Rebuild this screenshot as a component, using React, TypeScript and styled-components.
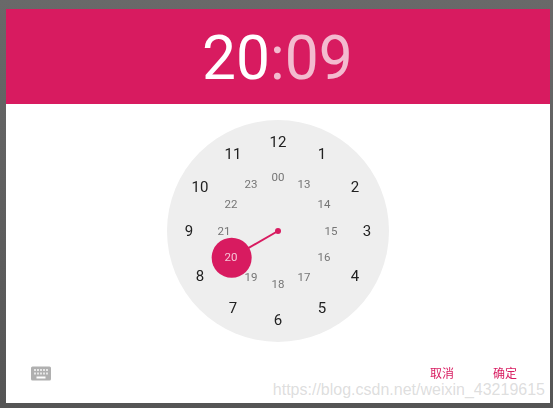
import React from "react";
import styled, { createGlobalStyle } from "styled-components";

const GlobalStyle = createGlobalStyle`
  html, body {
    margin: 0;
    padding: 0;
    height: 100%;
    overflow: hidden;
    background: #5f5f5f;
  }
  #root {
    height: 100%;
  }
`;

const PINK = "#d81b60";

const Backdrop = styled.div`
  width: 553px;
  height: 408px;
  padding: 9px 3px 5px 6px;
  box-sizing: border-box;
  background: linear-gradient(#696969, #555555);
  position: relative;
  font-family: Roboto, "Noto Sans CJK SC", sans-serif;
`;

const Dialog = styled.div`
  height: 100%;
  background: #fff;
  display: flex;
  flex-direction: column;
`;

const Header = styled.div`
  height: 95px;
  box-sizing: border-box;
  padding: 4px 1px 0 0;
  background: ${PINK};
  display: flex;
  justify-content: center;
  align-items: center;
  position: relative;
  color: #fff;
  font-size: 60.5px;
  line-height: 91px;
  font-weight: 400;
`;

const GhostTitle = styled.span`
  position: absolute;
  right: 22px;
  top: 5px;
  font-size: 22px;
  line-height: 26px;
  color: rgba(0, 0, 0, 0.02);
  white-space: nowrap;
`;

const Clock = styled.span`
  will-change: transform;
`;

const Part = styled.span<{ $dim?: boolean }>`
  opacity: ${(p) => (p.$dim ? 0.7 : 1)};
`;

const Colon = styled.span`
  opacity: 0.7;
`;

const Body = styled.div`
  flex: 1;
  display: flex;
  justify-content: center;
  padding: 16px 1px 0 0;
`;

const Face = styled.div`
  position: relative;
  width: 222px;
  height: 222px;
  border-radius: 50%;
  background: #eeeeee;
`;

const Hand = styled.svg`
  position: absolute;
  left: 0;
  top: 0;
`;

const Num = styled.span<{ $inner?: boolean; $active?: boolean }>`
  position: absolute;
  transform: translate(-50%, -50%);
  will-change: transform;
  font-size: ${(p) => (p.$inner ? "11.5px" : "15px")};
  color: ${(p) =>
    p.$active ? "rgba(255,255,255,0.75)" : p.$inner ? "#757575" : "#212121"};
  line-height: 1;
`;

const Footer = styled.div`
  height: 60px;
  display: flex;
  align-items: center;
  padding: 0 29px 0 25px;
`;

const KeyboardBtn = styled.svg`
  display: block;
`;

const Actions = styled.div`
  margin-left: auto;
  padding-bottom: 2px;
  display: flex;
  gap: 31px;
`;

const Action = styled.span`
  color: ${PINK};
  font-size: 12px;
  font-family: "Noto Sans CJK SC", sans-serif;
  width: 32px;
  text-align: center;
  will-change: transform;
`;

const Watermark = styled.div`
  position: absolute;
  right: 8px;
  top: 381px;
  font-family: "Liberation Sans", sans-serif;
  font-size: 16px;
  line-height: 18px;
  color: rgba(170, 170, 170, 0.4);
  white-space: nowrap;
`;

const C = 111;
const place = (index: number, radius: number, dy = 0) => {
  const a = (index * Math.PI) / 6;
  return {
    left: C + Math.sin(a) * radius,
    top: C - Math.cos(a) * radius + dy,
  };
};

const outer = ["12", "1", "2", "3", "4", "5", "6", "7", "8", "9", "10", "11"];
const inner = ["00", "13", "14", "15", "16", "17", "18", "19", "20", "21", "22", "23"];

const App = () => {
  const bubble = place(8, 53.5);
  return (
    <Backdrop>
      <GlobalStyle />
      <Dialog>
        <Header>
          <GhostTitle>Time Picker Dialog</GhostTitle>
          <Clock>
            <Part>20</Part>
            <Colon>:</Colon>
            <Part $dim>09</Part>
          </Clock>
        </Header>
        <Body>
          <Face>
            <Hand width="222" height="222">
              <line x1={C} y1={C} x2={bubble.left} y2={bubble.top} stroke={PINK} strokeWidth="2" />
              <circle cx={C} cy={C} r="3" fill={PINK} />
              <circle cx={bubble.left} cy={bubble.top} r="20" fill={PINK} />
            </Hand>
            {outer.map((n, i) => (
              <Num key={n} style={place(i, 89)}>
                {n}
              </Num>
            ))}
            {inner.map((n, i) => (
              <Num key={n} $inner $active={n === "20"} style={place(i, 53.5, 0.7)}>
                {n}
              </Num>
            ))}
          </Face>
        </Body>
        <Footer>
          <KeyboardBtn width="20" height="15" viewBox="0 0 20 15">
            <rect width="20" height="14" y="0.5" rx="1.5" fill="#b0b0b0" />
            {[3, 6, 9, 12, 15].map((x) => (
              <rect key={x} x={x} y="3" width="2" height="2" fill="#e6e6e6" />
            ))}
            {[3, 6, 9, 12, 15].map((x) => (
              <rect key={x} x={x} y="6.5" width="2" height="2" fill="#e6e6e6" />
            ))}
            <rect x="5.5" y="10.5" width="9" height="2" fill="#fff" />
          </KeyboardBtn>
          <Actions>
            <Action>取消</Action>
            <Action>确定</Action>
          </Actions>
        </Footer>
      </Dialog>
      <Watermark>https://blog.csdn.net/weixin_43219615</Watermark>
    </Backdrop>
  );
};

export default App;
